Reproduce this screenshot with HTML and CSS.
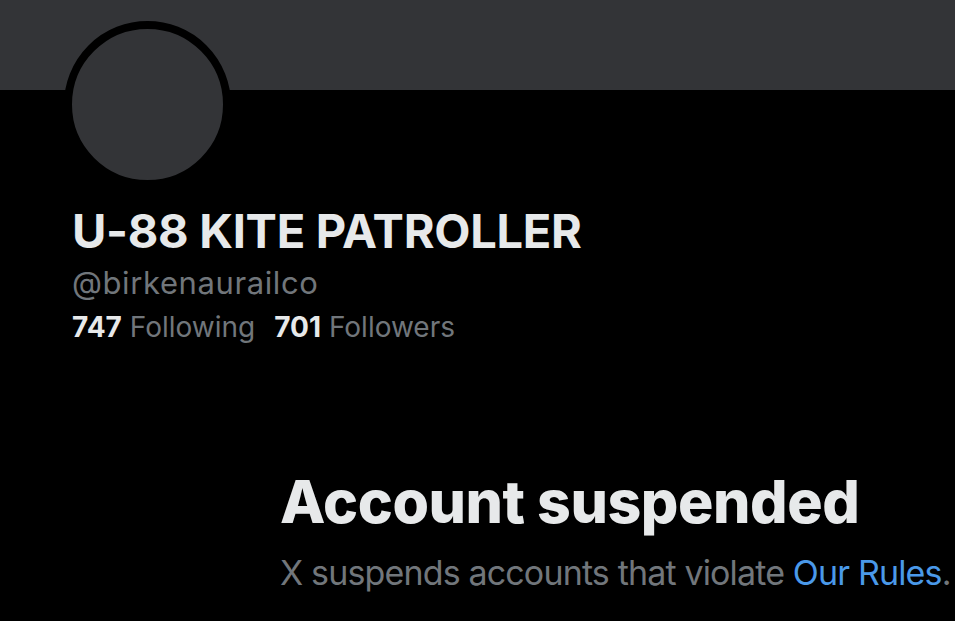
FILE: index.html
```html
<!DOCTYPE html>
<html lang="en">
<head>
  <meta charset="UTF-8">
  <meta name="viewport" content="width=device-width, initial-scale=1.0">
  <title>Account suspended</title>
  <link rel="stylesheet" href="styles.css">
</head>
<body>
  <div class="profile">
    <!-- banner -->
    <div class="banner"></div>

    <div class="info">
      <div class="avatar"></div>
      <h1 class="name">U-88 KITE PATROLLER</h1>
      <div class="handle">@birkenaurailco</div>
      <div class="stats">
        <span class="stat"><b>747</b> Following</span>
        <span class="stat"><b>701</b> Followers</span>
      </div>
    </div>

    <!-- suspended notice -->
    <div class="notice">
      <h2 class="notice-title">Account suspended</h2>
      <p class="notice-text">X suspends accounts that violate <a href="#">Our Rules</a>.</p>
    </div>
  </div>
</body>
</html>
```

FILE: styles.css
```css
body {
  margin: 0;
  background: #000;
  color: #e7e9ea;
  font-family: Inter, "Liberation Sans", sans-serif;
  overflow: hidden;
}

.banner {
  height: 90px;
  background: #333437;
}

.info {
  padding-left: 72px;
}

.avatar {
  width: 151px;
  height: 151px;
  margin-top: -69px;
  margin-left: -8px;
  border: 8px solid #000;
  border-radius: 50%;
  background: #333437;
}

.name {
  margin: 15px 0 0;
  font-size: 47px;
  font-weight: 700;
  line-height: 56px;
  letter-spacing: -0.3px;
}

.handle {
  margin-top: 6px;
  font-size: 31px;
  line-height: 36px;
  letter-spacing: 0.6px;
  color: #71767b;
}

.stats {
  display: flex;
  gap: 19px;
  margin-top: 10px;
  font-size: 28px;
  line-height: 32px;
  color: #71767b;
}

.stats b {
  color: #e7e9ea;
  font-weight: 700;
}

.notice {
  padding-left: 280px;
  margin-top: 123px;
}

.notice-title {
  margin: 0;
  font-size: 59px;
  font-weight: 800;
  line-height: 72px;
  letter-spacing: -0.45px;
}

.notice-text {
  margin: 16px 0 0;
  font-size: 34px;
  line-height: 38px;
  letter-spacing: -0.85px;
  color: #71767b;
  white-space: nowrap;
}

.notice-text a {
  color: #4a99e9;
  text-decoration: none;
}
```
